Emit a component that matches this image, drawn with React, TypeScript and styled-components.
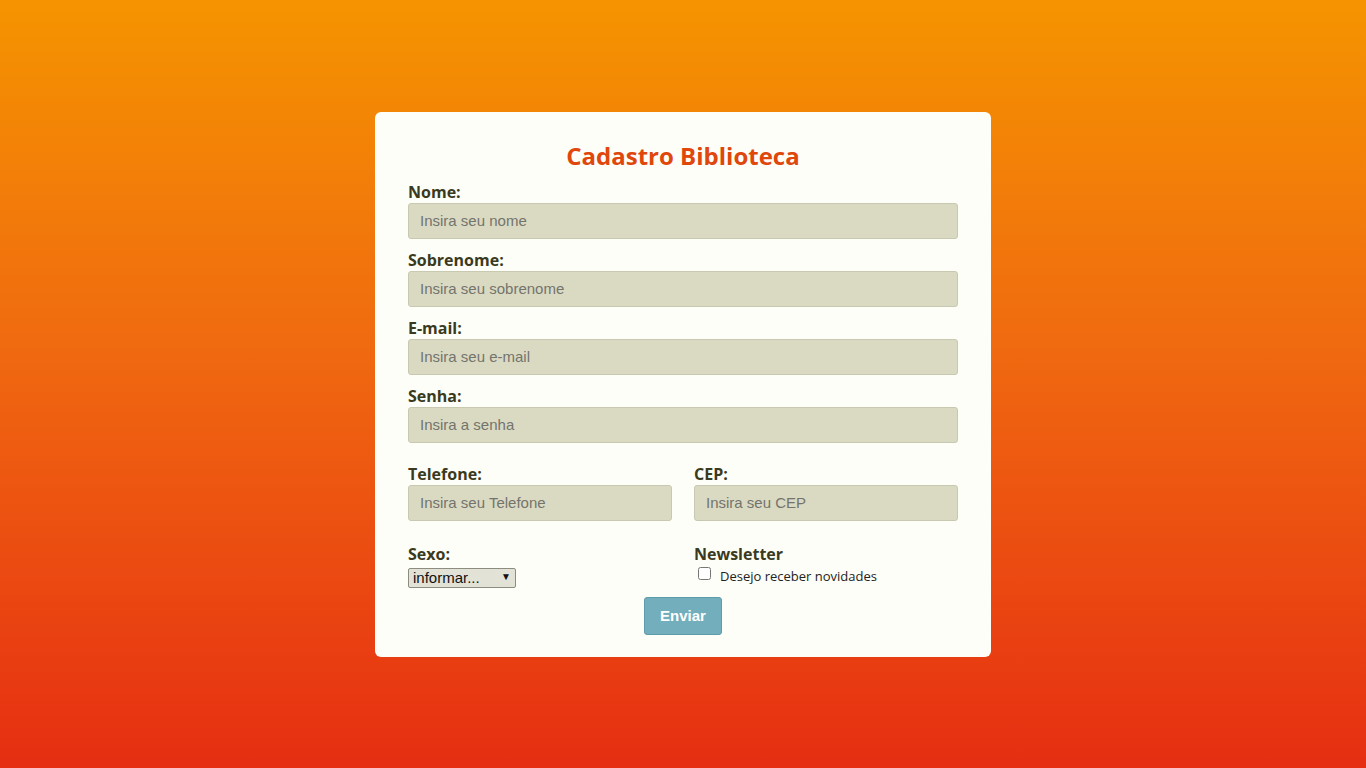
import React from "react";
import styled, { createGlobalStyle } from "styled-components";

const GlobalStyle = createGlobalStyle`
  html, body { margin: 0; padding: 0; }
  body {
    background: linear-gradient(180deg, #f59400 0%, #f06a10 45%, #e62e12 100%);
    min-height: 100vh;
    font-family: "Open Sans", "Liberation Sans", sans-serif;
  }
  * { box-sizing: border-box; }
`;

const Page = styled.div`
  min-height: 100vh;
  display: flex;
  align-items: center;
  justify-content: center;
`;

const Card = styled.form`
  width: 616px;
  background: #fefef8;
  border-radius: 6px;
  padding: 28px 33px 22px;
  display: flex;
  flex-direction: column;
`;

const Title = styled.h1`
  margin: 0 0 9px;
  font-family: "Open Sans", sans-serif;
  font-size: 24px;
  line-height: 32px;
  font-weight: 700;
  color: #e0470c;
  text-align: center;
`;

const Field = styled.div<{ $mb?: number }>`
  display: flex;
  flex-direction: column;
  margin-bottom: ${(p) => (p.$mb ?? 10)}px;
`;

const Label = styled.label`
  font-family: "Open Sans", sans-serif;
  font-size: 16px;
  line-height: 22px;
  font-weight: 700;
  color: #3a3a1e;
`;

const Input = styled.input`
  height: 36px;
  width: 100%;
  border: 1px solid #c9c9b2;
  border-radius: 3px;
  background: #dadac3;
  padding: 0 11px;
  font-family: "Liberation Sans", Arial, sans-serif;
  font-size: 15px;
  color: #333;
  outline: none;
  &::placeholder { color: #74746c; }
`;

const Row = styled.div<{ $mt: number }>`
  display: grid;
  grid-template-columns: 1fr 1fr;
  column-gap: 22px;
  margin-top: ${(p) => p.$mt}px;
`;

const SelectWrap = styled.div`
  position: relative;
  width: 108px;
  height: 20px;
  margin-top: 1px;
`;

const Select = styled.select`
  appearance: none;
  -webkit-appearance: none;
  width: 108px;
  height: 20px;
  border: 1px solid #8c8c80;
  border-radius: 2px;
  background: #e2e2d6;
  padding: 0 4px;
  font-family: "Liberation Sans", Arial, sans-serif;
  font-size: 15px;
  line-height: 18px;
  color: #111;
  outline: none;
`;

const Arrow = styled.span`
  position: absolute;
  right: 5px;
  top: 4px;
  font-size: 10px;
  line-height: 12px;
  color: #111;
  pointer-events: none;
`;

const CheckRow = styled.label`
  display: flex;
  align-items: center;
  height: 18px;
  margin-top: 2px;
  font-family: "Open Sans", sans-serif;
  font-size: 13px;
  color: #222;
`;

const Check = styled.input`
  width: 13px;
  height: 13px;
  margin: 0 9px 0 4px;
  position: relative;
  top: -2px;
`;

const Button = styled.button`
  align-self: center;
  margin-top: 11px;
  width: 78px;
  height: 38px;
  border: 1px solid #5f9cab;
  border-radius: 3px;
  background: #72aebb;
  color: #fff;
  font-family: "Liberation Sans", Arial, sans-serif;
  font-size: 15px;
  font-weight: 700;
  cursor: pointer;
`;

export default function App() {
  return (
    <>
      <GlobalStyle />
      <Page>
        <Card onSubmit={(e) => e.preventDefault()}>
          <Title>Cadastro Biblioteca</Title>
          <Field>
            <Label>Nome:</Label>
            <Input placeholder="Insira seu nome" />
          </Field>
          <Field>
            <Label>Sobrenome:</Label>
            <Input placeholder="Insira seu sobrenome" />
          </Field>
          <Field>
            <Label>E-mail:</Label>
            <Input placeholder="Insira seu e-mail" />
          </Field>
          <Field>
            <Label>Senha:</Label>
            <Input type="password" placeholder="Insira a senha" />
          </Field>
          <Row $mt={10}>
            <Field>
              <Label>Telefone:</Label>
              <Input placeholder="Insira seu Telefone" />
            </Field>
            <Field>
              <Label>CEP:</Label>
              <Input placeholder="Insira seu CEP" />
            </Field>
          </Row>
          <Row $mt={12}>
            <Field $mb={0}>
              <Label>Sexo:</Label>
              <SelectWrap>
                <Select defaultValue="informar">
                  <option value="informar">informar...</option>
                  <option value="m">Masculino</option>
                  <option value="f">Feminino</option>
                </Select>
                <Arrow>▼</Arrow>
              </SelectWrap>
            </Field>
            <Field $mb={0}>
              <Label>Newsletter</Label>
              <CheckRow>
                <Check type="checkbox" />
                Desejo receber novidades
              </CheckRow>
            </Field>
          </Row>
          <Button type="submit">Enviar</Button>
        </Card>
      </Page>
    </>
  );
}
